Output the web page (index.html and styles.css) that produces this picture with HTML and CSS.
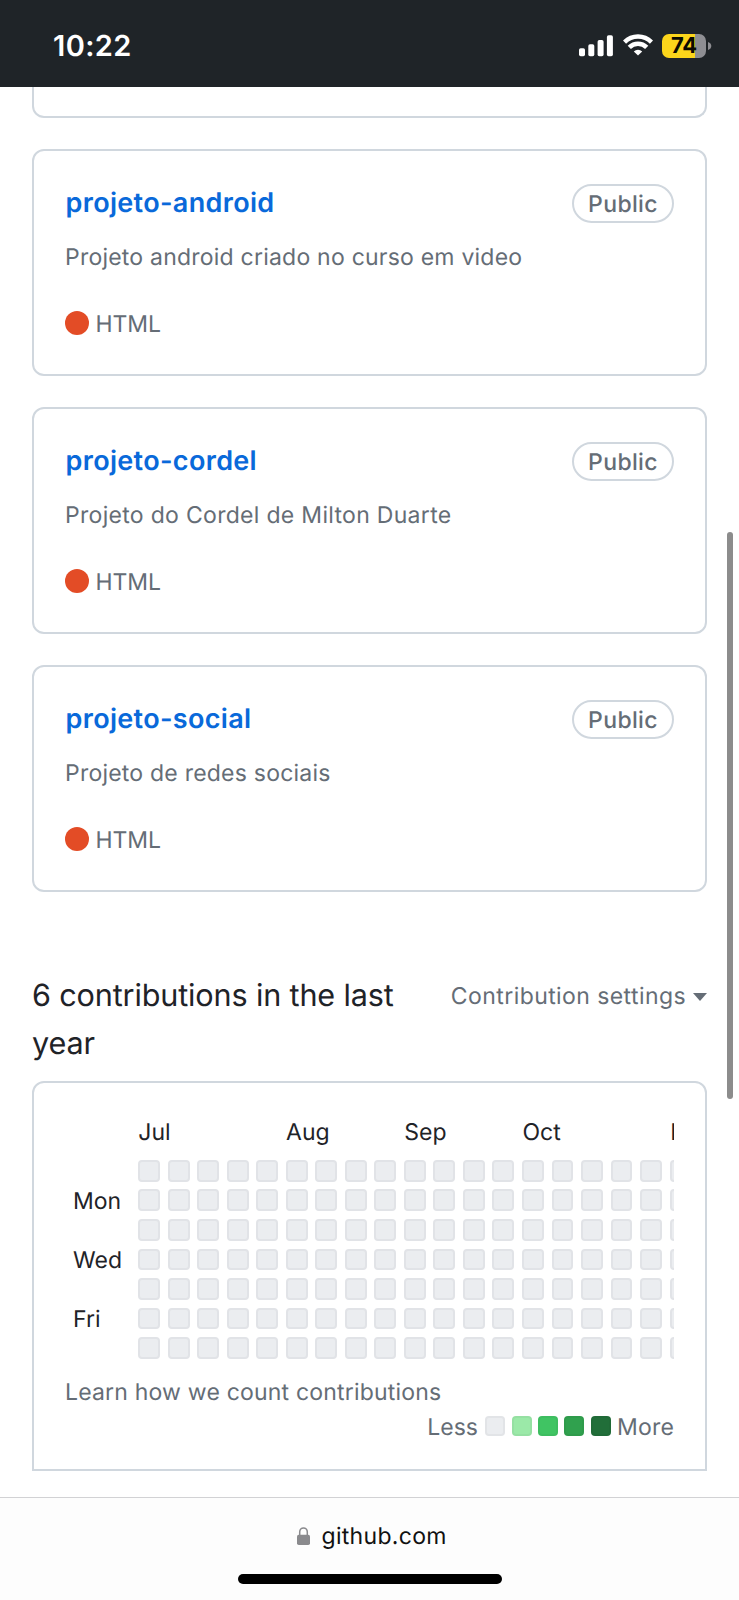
FILE: index.html
```html
<!DOCTYPE html>
<html lang="en">
<head>
<meta charset="utf-8">
<title>github.com</title>
<link rel="stylesheet" href="styles.css">
</head>
<body>
<header class="status">
  <span class="clock">10:22</span>
  <div class="status-icons">
    <svg class="signal" width="34" height="22" viewBox="0 0 34 22" fill="#fff"><rect x="0" y="13.2" width="6" height="8" rx="1.7"/><rect x="9.3" y="9.3" width="6" height="11.9" rx="1.7"/><rect x="18.6" y="5" width="6" height="16.2" rx="1.7"/><rect x="27.9" y="0.2" width="6" height="21" rx="1.7"/></svg>
    <svg class="wifi" width="30" height="22" viewBox="0 0 30 22" fill="none" stroke="#fff" stroke-width="4.5"><path d="M1.5 8.1A19.3 19.3 0 0 1 28.5 8.1"/><path d="M6.3 13.4A12.2 12.2 0 0 1 23.7 13.4"/><path d="M15 21.6L10.8 17.5A6 6 0 0 1 19.2 17.5Z" fill="#fff" stroke="none"/></svg>
    <div class="battery"><div class="battery-body">74</div><svg width="4" height="8" viewBox="0 0 4 8"><path d="M0 0Q3.3 1.2 3.3 4T0 8Z" fill="#8e8e93"/></svg></div>
  </div>
</header>
<main class="page">
  <div class="card card-cut"></div>
  <article class="card">
    <div class="card-head"><a class="repo">projeto-android</a><span class="pill">Public</span></div>
    <p class="desc">Projeto android criado no curso em video</p>
    <div class="lang"><i class="dot"></i><span>HTML</span></div>
  </article>
  <article class="card">
    <div class="card-head"><a class="repo">projeto-cordel</a><span class="pill">Public</span></div>
    <p class="desc desc-wide">Projeto do Cordel de Milton Duarte</p>
    <div class="lang"><i class="dot"></i><span>HTML</span></div>
  </article>
  <article class="card">
    <div class="card-head"><a class="repo">projeto-social</a><span class="pill">Public</span></div>
    <p class="desc">Projeto de redes sociais</p>
    <div class="lang"><i class="dot"></i><span>HTML</span></div>
  </article>
  <div class="contrib-head">
    <h2>6 contributions in the last<br>year</h2>
    <div class="settings"><span>Contribution settings</span><i class="caret"></i></div>
  </div>
  <section class="graph">
    <div class="calendar">
      <div class="days"><span>Mon</span><span>Wed</span><span>Fri</span></div>
      <div class="weeks">
        <div class="months"><span class="m5">Jul</span><span class="m4">Aug</span><span class="m4">Sep</span><span class="m5">Oct</span><span class="m4">Nov</span></div>
        <div class="cells" id="cells"></div>
      </div>
    </div>
    <p class="learn">Learn how we count contributions</p>
    <div class="legend"><span>Less</span><i class="l0"></i><i class="l1"></i><i class="l2"></i><i class="l3"></i><i class="l4"></i><span>More</span></div>
  </section>
  <div class="scrollbar"></div>
</main>
<footer class="urlbar">
  <div class="url">
    <svg width="13" height="18" viewBox="0 0 13 18"><rect x="0" y="7.7" width="13" height="10.3" rx="1.8" fill="#8a8a8d"/><path d="M2.7 8.5V5a3.8 4.1 0 0 1 7.6 0V8.5" fill="none" stroke="#8a8a8d" stroke-width="1.5"/></svg>
    <span>github.com</span>
  </div>
  <div class="home"></div>
</footer>
<script src="script.js"></script>
</body>
</html>
```
FILE: styles.css
```css
* { box-sizing: border-box; }
body {
  margin: 0;
  width: 739px;
  height: 1600px;
  overflow: hidden;
  background: #fff;
  font-family: Inter, "Liberation Sans", sans-serif;
  font-size: 23px;
  color: #1f2328;
  text-rendering: geometricPrecision;
}
p, h2 { margin: 0; font-weight: 400; }
span, a { white-space: nowrap; }
i { display: block; flex: none; }
svg { display: block; flex: none; }

.status {
  height: 87px;
  background: #1f2428;
  display: flex;
  justify-content: space-between;
  padding: 33px 27px 0 53px;
}
.clock { color: #fff; font-size: 29px; font-weight: 600; line-height: 25px; letter-spacing: 0.4px; }
.status-icons { display: flex; height: 25px; }
.signal { margin: 2px 10px 0 0; }
.wifi { margin: 1px 9px 0 0; }
.battery { display: flex; align-items: center; gap: 2px; }
.battery-body {
  width: 44px;
  height: 24px;
  border-radius: 7px;
  background: linear-gradient(90deg, #fbd51b 33px, #8e8e93 33px);
  color: #0b0b00;
  font-size: 22px;
  font-weight: 700;
  line-height: 25px;
  text-align: center;
  letter-spacing: -0.2px;
}

.page { position: relative; height: 1410px; padding: 0 32px; overflow: hidden; }
.card {
  height: 226.6px;
  margin-bottom: 31.6px;
  border: 2px solid #d0d7de;
  border-radius: 12px;
  padding: 33px 31px 0 31px;
}
.card-cut { height: 31px; margin-bottom: 31px; padding: 0; border-top: 0; border-radius: 0 0 12px 12px; }
.card-head { display: flex; justify-content: space-between; align-items: center; height: 39px; }
.repo { color: #0969da; font-size: 27px; font-weight: 600; line-height: 36px; padding: 0 0 2px 0.5px; letter-spacing: 0.33px; }
.pill {
  width: 102px;
  height: 39px;
  border: 2px solid #d0d7de;
  border-radius: 20px;
  color: #656d76;
  font-weight: 500;
  line-height: 36px;
  text-align: center;
  letter-spacing: 0.35px;
}
.desc { margin-top: 17px; line-height: 35px; color: #656d76; white-space: nowrap; letter-spacing: 0.22px; }
.desc-wide { letter-spacing: 0.3px; }
.lang { display: flex; align-items: center; margin-top: 31.6px; height: 35px; color: #656d76; }
.dot { width: 24px; height: 24px; border-radius: 50%; background: #e34c26; margin: 0 6.4px 3px 0; }

.contrib-head { display: flex; justify-content: space-between; margin-top: 80px; height: 109px; }
h2 { font-size: 30.6px; line-height: 47.6px; letter-spacing: -0.15px; }
.settings { display: flex; align-items: center; height: 49px; color: #656d76; letter-spacing: 0.42px; }
.caret { margin: 2px 0 0 7px; border: 7.5px solid transparent; border-top: 8px solid #656d76; border-bottom: 0; }

.graph { height: 390px; border: 2px solid #d0d7de; border-radius: 12px 12px 0 0; padding: 32px 31px 0 31px; }
.calendar { display: flex; height: 246px; overflow: hidden; }
.days { width: 73.3px; flex: none; padding: 72px 0 0 8px; }
.days span { display: block; height: 59.1px; line-height: 29px; }
.weeks { overflow: hidden; flex: 1; }
.months { display: flex; height: 45px; line-height: 34px; }
.months span { flex: none; }
.m5 { width: 147.8px; }
.m4 { width: 118.2px; }
.cells {
  display: grid;
  grid-template-rows: repeat(7, 21.8px);
  grid-auto-columns: 21.8px;
  grid-auto-flow: column;
  gap: 7.73px;
}
.cells i { background: #ebedf0; border: 2px solid #e1e3e7; border-radius: 4px; }
.learn { line-height: 36px; margin-top: 13px; height: 36px; color: #656d76; letter-spacing: 0.19px; }
.legend { display: flex; align-items: center; justify-content: flex-end; height: 35px; color: #656d76; }
.legend i { width: 20px; height: 20px; border-radius: 4px; border: 2px solid rgba(27, 31, 35, .04); margin-bottom: 3px; }
.legend .l0 { background: #ebedf0; margin-left: 7px; margin-right: 7px; }
.l1 { background: #9be9a8; margin-right: 6px; }
.l2 { background: #40c463; margin-right: 6px; }
.l3 { background: #30a14e; margin-right: 7px; }
.l4 { background: #216e39; margin-right: 6px; }
.legend span:last-child { letter-spacing: 0.2px; }

.scrollbar {
  position: absolute;
  right: 6px;
  top: 445px;
  width: 6px;
  height: 567px;
  border-radius: 3px;
  background: #8c8c8c;
}

.urlbar { height: 103px; border-top: 1px solid #d2d2d4; background: #fdfdfd; }
.url { display: flex; align-items: center; height: 40px; margin: 18px 0 0 296.5px; color: #111; letter-spacing: 0.3px; }
.url svg { margin-right: 12px; }
.home { width: 264px; height: 10px; border-radius: 5px; background: #000; margin: 18px 0 0 238px; }
```
FILE: script.js
```js
// 19 weeks of 7 days; the last column is clipped by the scroll area
const cells = document.getElementById('cells');
for (let n = 0; n < 19 * 7; n++) cells.appendChild(document.createElement('i'));
```
